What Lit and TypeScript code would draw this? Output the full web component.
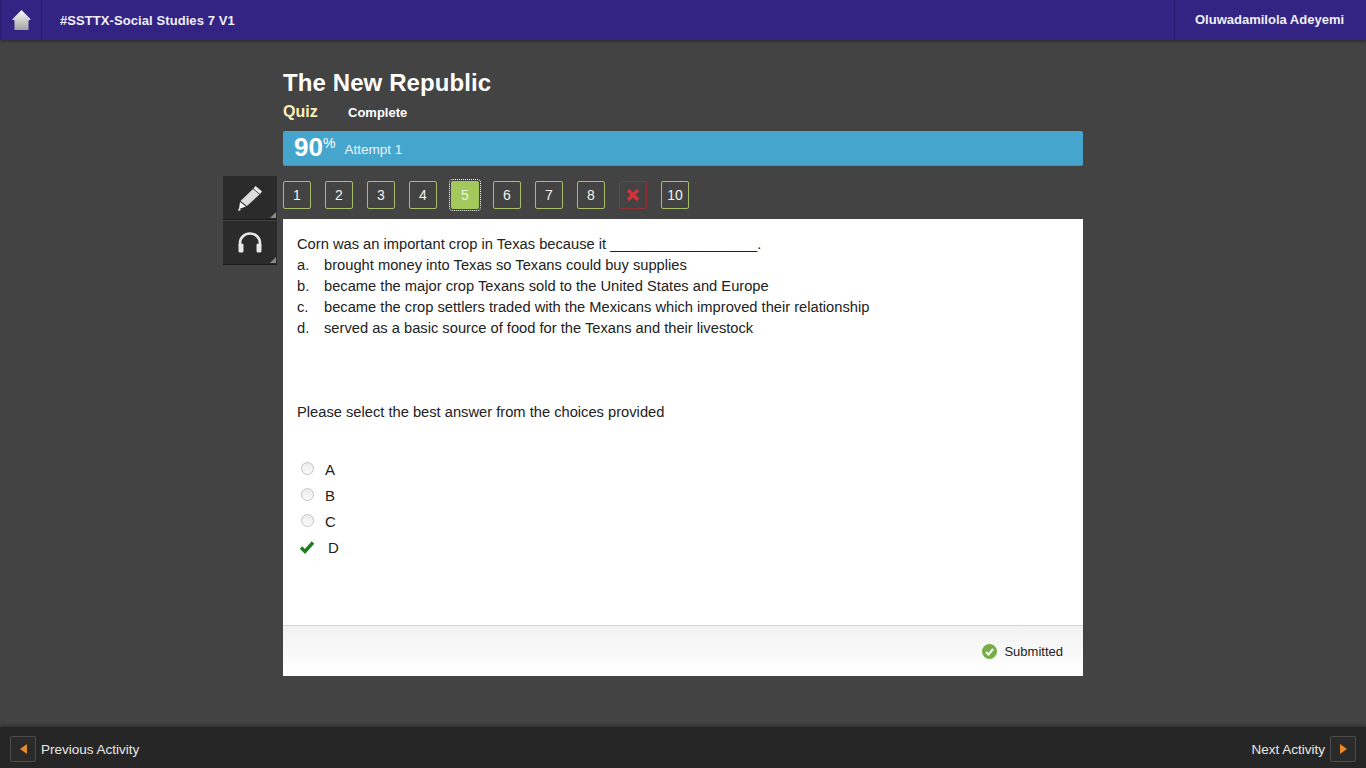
import { LitElement, html, css, svg } from 'lit'
import { customElement } from 'lit/decorators.js'

const lines = [
  ['a.', 'brought money into Texas so Texans could buy supplies'],
  ['b.', 'became the major crop Texans sold to the United States and Europe'],
  ['c.', 'became the crop settlers traded with the Mexicans which improved their relationship'],
  ['d.', 'served as a basic source of food for the Texans and their livestock'],
]

const homeIcon = svg`
  <defs><linearGradient id="hg" x1="0" y1="0" x2="0" y2="1">
    <stop offset="0" stop-color="#fbfbfb"/><stop offset="1" stop-color="#a4a4a4"/>
  </linearGradient></defs>
  <path d="M9.5 0 L19 9.5 L16.5 10.5 L16.5 20 L2.5 20 L2.5 10.5 L0 9.5 Z" fill="url(#hg)"/>`

@customElement('app-root')
export class AppRoot extends LitElement {
  static styles = css`
    :host {
      display: flex;
      flex-direction: column;
      height: 768px;
      overflow: hidden;
      background: #434343;
      font-family: "Liberation Sans", Arial, sans-serif;
      color: #fff;
    }

    .top {
      flex: none;
      height: 40px;
      display: flex;
      align-items: center;
      background: #332383;
      box-shadow: 0 1px 3px rgba(0, 0, 0, 0.45);
      font-size: 13px;
      font-weight: bold;
      color: #f0eff8;
    }
    .home {
      width: 42px;
      height: 40px;
      box-sizing: border-box;
      display: flex;
      align-items: center;
      justify-content: center;
      border-right: 1px solid #2a1c72;
      border-left: 1px solid #2a1c72;
    }
    .course { margin-left: 18px; flex: 1; letter-spacing: 0.08px; }
    .user {
      width: 192px;
      height: 40px;
      box-sizing: border-box;
      border-left: 1px solid #2a1c72;
      padding-left: 20px;
      line-height: 40px;
    }

    .main {
      flex: 1;
      display: flex;
      justify-content: center;
      min-height: 0;
    }
    .col {
      width: 800px;
      padding-top: 29px;
      position: relative;
    }
    h1 {
      margin: 0;
      font-size: 24px;
      line-height: 28px;
      font-weight: bold;
      letter-spacing: 0.1px;
      color: #fff;
    }
    .sub {
      display: flex;
      align-items: baseline;
      margin-top: 6px;
      height: 24px;
    }
    .quiz { font-size: 16px; font-weight: bold; color: #fbeeb8; width: 65px; }
    .state { font-size: 13px; font-weight: bold; }

    .score {
      margin-top: 4px;
      height: 35px;
      box-sizing: border-box;
      display: flex;
      align-items: center;
      padding-left: 11px;
      background: #46a5cd;
      border-radius: 2px;
      border-bottom: 1px solid #3d93b8;
    }
    .pct { font-size: 26px; font-weight: bold; line-height: 30px; position: relative; top: 1px; }
    .pct sup { font-size: 14px; font-weight: normal; vertical-align: baseline; position: relative; top: -8px; }
    .attempt { font-size: 13.5px; margin-left: 9px; color: #e6f4fa; position: relative; top: 1px; }

    .nav {
      height: 53px;
      display: flex;
      align-items: center;
      gap: 14px;
      padding-top: 4px;
      box-sizing: border-box;
      position: relative;
    }
    .num {
      width: 28px;
      height: 28px;
      box-sizing: border-box;
      border: 1px solid #a7bd6c;
      border-radius: 2px;
      display: flex;
      align-items: center;
      justify-content: center;
      font-size: 14px;
      color: #f2f2f2;
    }
    .num.current {
      background: #a3c95c;
      color: #eef6dd;
      outline: 1px dotted #fff;
      outline-offset: 1px;
      border-color: #a3c95c;
    }
    .num.wrong { border-color: #94323b; }

    .tools {
      position: absolute;
      left: -60px;
      top: 10px;
      width: 54px;
    }
    .tool {
      height: 43px;
      margin-bottom: 1px;
      background: #2b2b2b;
      border-bottom: 1px solid #1c1c1c;
      display: flex;
      align-items: center;
      justify-content: center;
      position: relative;
    }
    .tool::after {
      content: '';
      position: absolute;
      right: 1px;
      bottom: 1px;
      border-style: solid;
      border-width: 0 0 6px 6px;
      border-color: transparent transparent #8a8a8a transparent;
    }

    .card {
      background: #fff;
      color: #222;
      height: 457px;
      display: flex;
      flex-direction: column;
    }
    .body {
      flex: 1;
      padding: 15px 14px 0;
      font-size: 14.7px;
      line-height: 21px;
    }
    .opt { display: flex; }
    .opt span:first-child { width: 27px; }
    .prompt { margin-top: 63px; }
    .answers { margin-top: 33px; font-size: 15px; }
    .ans {
      display: flex;
      align-items: center;
      height: 26px;
    }
    .radio {
      width: 13px;
      height: 13px;
      margin: 0 11px 2px 4px;
      box-sizing: border-box;
      border: 1px solid #c4c4c4;
      border-radius: 50%;
      background: linear-gradient(#ececec, #fafafa);
    }
    .tick { margin: 0 13px 0 2px; display: block; }

    .foot {
      flex: none;
      height: 51px;
      box-sizing: border-box;
      border-top: 1px solid #d5d5d5;
      background: linear-gradient(#f2f2f2, #fff);
      display: flex;
      align-items: center;
      justify-content: flex-end;
      padding-right: 20px;
      font-size: 13px;
      gap: 7px;
    }

    .bottom {
      flex: none;
      height: 41px;
      box-sizing: border-box;
      display: flex;
      align-items: center;
      justify-content: space-between;
      padding: 3px 10px 0;
      background: #262626;
      box-shadow: 0 -1px 4px rgba(0, 0, 0, 0.4);
      font-size: 13.5px;
      color: #e8e8e8;
    }
    .link { display: flex; align-items: center; gap: 5px; }
    .arrow {
      width: 26px;
      height: 26px;
      box-sizing: border-box;
      border: 1px solid #4c4c4c;
      border-radius: 2px;
      display: flex;
      align-items: center;
      justify-content: center;
      background: #2a2a2a;
    }
  `

  render() {
    const nums = ['1', '2', '3', '4', '5', '6', '7', '8', 'x', '10']
    return html`
      <div class="top">
        <div class="home"><svg width="19" height="20" viewBox="0 0 19 20">${homeIcon}</svg></div>
        <div class="course">#SSTTX-Social Studies 7 V1</div>
        <div class="user">Oluwadamilola Adeyemi</div>
      </div>
      <div class="main">
        <div class="col">
          <h1>The New Republic</h1>
          <div class="sub"><span class="quiz">Quiz</span><span class="state">Complete</span></div>
          <div class="score">
            <span class="pct">90<sup>%</sup></span>
            <span class="attempt">Attempt 1</span>
          </div>
          <div class="nav">
            <div class="tools">
              <div class="tool">
                <svg width="26" height="26" viewBox="0 0 26 26">
                  <path d="M18.5 1 L25 6.5 L23 9 L16.5 3.5 Z" fill="#f0f0f0"/>
                  <path d="M16 4 L22.5 9.5 L10 21 L3.5 16 Z" fill="#dcdcdc"/>
                  <path d="M3 17 L9 21.5 L2 24 Z" fill="#f4f4f4"/>
                  <path d="M2 23 L1 26 L4 25 Z" fill="#f4f4f4"/>
                </svg>
              </div>
              <div class="tool">
                <svg width="26" height="22" viewBox="0 0 26 22">
                  <path d="M3 14 V11 A10 9.5 0 0 1 23 11 V14" fill="none" stroke="#e8e8e8" stroke-width="2.6"/>
                  <rect x="1.5" y="11.5" width="5" height="9" rx="1.5" fill="#e8e8e8"/>
                  <rect x="19.5" y="11.5" width="5" height="9" rx="1.5" fill="#e8e8e8"/>
                </svg>
              </div>
            </div>
            ${nums.map(n => n === 'x'
              ? html`<div class="num wrong">
                  <svg width="14" height="14" viewBox="0 0 14 14"><path d="M2 2 L12 12 M12 2 L2 12" stroke="#d2323c" stroke-width="3.6"/></svg>
                </div>`
              : html`<div class="num ${n === '5' ? 'current' : ''}">${n}</div>`)}
          </div>
          <div class="card">
            <div class="body">
              <div>Corn was an important crop in Texas because it __________________.</div>
              ${lines.map(l => html`<div class="opt"><span>${l[0]}</span><span>${l[1]}</span></div>`)}
              <div class="prompt">Please select the best answer from the choices provided</div>
              <div class="answers">
                ${['A', 'B', 'C'].map(a => html`<div class="ans"><span class="radio"></span>${a}</div>`)}
                <div class="ans">
                  <svg class="tick" width="16" height="14" viewBox="0 0 16 14"><path d="M2 7.5 L6 11.5 L14 2.5" fill="none" stroke="#1f7f1f" stroke-width="3.4"/></svg>
                  D
                </div>
              </div>
            </div>
            <div class="foot">
              <svg width="15" height="15" viewBox="0 0 15 15">
                <circle cx="7.5" cy="7.5" r="7.5" fill="#74ae45"/>
                <path d="M4 8 L6.5 10.5 L11 5" fill="none" stroke="#fff" stroke-width="2"/>
              </svg>
              <span>Submitted</span>
            </div>
          </div>
        </div>
      </div>
      <div class="bottom">
        <div class="link">
          <span class="arrow"><svg width="7" height="10" viewBox="0 0 7 10"><path d="M7 0 V10 L0 5 Z" fill="#e98a2b"/></svg></span>
          <span>Previous Activity</span>
        </div>
        <div class="link">
          <span>Next Activity</span>
          <span class="arrow"><svg width="7" height="10" viewBox="0 0 7 10"><path d="M0 0 V10 L7 5 Z" fill="#e98a2b"/></svg></span>
        </div>
      </div>
    `
  }
}
